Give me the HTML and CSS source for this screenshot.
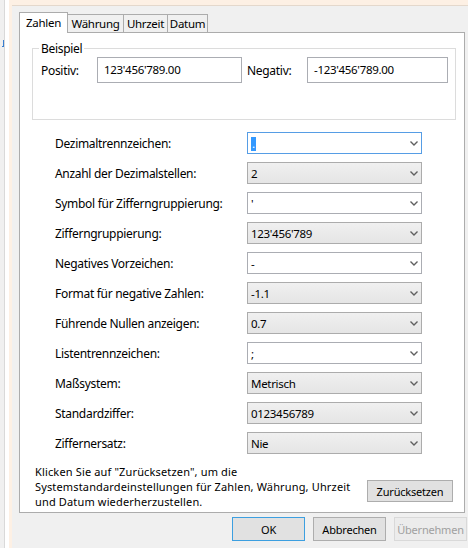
FILE: index.html
```html
<!DOCTYPE html>
<html lang="de">
<head>
  <meta charset="UTF-8" />
  <meta name="viewport" content="width=device-width, initial-scale=1.0"/>
  <title>Format anpassen</title>
  <link rel="stylesheet" href="styles.css">
</head>
<body>
  <div class="screen">
    <div class="side-win"><span class="side-mark"></span></div>
    <div class="side-gap"></div>
    <div class="frame">
      <div class="dialog">
        <div class="tabs">
          <span class="tab active tab-zahlen">Zahlen</span>
          <span class="tab tab-waehrung">Währung</span>
          <span class="tab tab-uhrzeit">Uhrzeit</span>
          <span class="tab tab-datum">Datum</span>
        </div>

        <div class="panel">
          <fieldset class="example">
            <legend>Beispiel</legend>
            <div class="example-row">
              <span class="ex-label">Positiv:</span>
              <div class="field field-pos">123'456'789.00</div>
              <span class="ex-label ex-neg">Negativ:</span>
              <div class="field field-neg">-123'456'789.00</div>
            </div>
          </fieldset>

          <div class="settings">
            <div class="row">
              <span class="row-label">Dezimaltrennzeichen:</span>
              <div class="combo edit focus"><span><span class="sel">.</span></span>
                <svg class="chev" width="8" height="5" viewBox="0 0 8 5"><path d="M0.5 0.5 L4 4 L7.5 0.5" fill="none" stroke="#606060" stroke-width="1.4"/></svg></div>
            </div>
            <div class="row">
              <span class="row-label">Anzahl der Dezimalstellen:</span>
              <div class="combo list"><span>2</span>
                <svg class="chev" width="8" height="5" viewBox="0 0 8 5"><path d="M0.5 0.5 L4 4 L7.5 0.5" fill="none" stroke="#606060" stroke-width="1.4"/></svg></div>
            </div>
            <div class="row">
              <span class="row-label">Symbol für Zifferngruppierung:</span>
              <div class="combo edit"><span>'</span>
                <svg class="chev" width="8" height="5" viewBox="0 0 8 5"><path d="M0.5 0.5 L4 4 L7.5 0.5" fill="none" stroke="#606060" stroke-width="1.4"/></svg></div>
            </div>
            <div class="row">
              <span class="row-label">Zifferngruppierung:</span>
              <div class="combo list"><span>123'456'789</span>
                <svg class="chev" width="8" height="5" viewBox="0 0 8 5"><path d="M0.5 0.5 L4 4 L7.5 0.5" fill="none" stroke="#606060" stroke-width="1.4"/></svg></div>
            </div>
            <div class="row">
              <span class="row-label">Negatives Vorzeichen:</span>
              <div class="combo edit"><span>-</span>
                <svg class="chev" width="8" height="5" viewBox="0 0 8 5"><path d="M0.5 0.5 L4 4 L7.5 0.5" fill="none" stroke="#606060" stroke-width="1.4"/></svg></div>
            </div>
            <div class="row">
              <span class="row-label">Format für negative Zahlen:</span>
              <div class="combo list"><span>-1.1</span>
                <svg class="chev" width="8" height="5" viewBox="0 0 8 5"><path d="M0.5 0.5 L4 4 L7.5 0.5" fill="none" stroke="#606060" stroke-width="1.4"/></svg></div>
            </div>
            <div class="row">
              <span class="row-label">Führende Nullen anzeigen:</span>
              <div class="combo list"><span>0.7</span>
                <svg class="chev" width="8" height="5" viewBox="0 0 8 5"><path d="M0.5 0.5 L4 4 L7.5 0.5" fill="none" stroke="#606060" stroke-width="1.4"/></svg></div>
            </div>
            <div class="row">
              <span class="row-label">Listentrennzeichen:</span>
              <div class="combo edit"><span>;</span>
                <svg class="chev" width="8" height="5" viewBox="0 0 8 5"><path d="M0.5 0.5 L4 4 L7.5 0.5" fill="none" stroke="#606060" stroke-width="1.4"/></svg></div>
            </div>
            <div class="row">
              <span class="row-label">Maßsystem:</span>
              <div class="combo list"><span>Metrisch</span>
                <svg class="chev" width="8" height="5" viewBox="0 0 8 5"><path d="M0.5 0.5 L4 4 L7.5 0.5" fill="none" stroke="#606060" stroke-width="1.4"/></svg></div>
            </div>
            <div class="row">
              <span class="row-label">Standardziffer:</span>
              <div class="combo list"><span>0123456789</span>
                <svg class="chev" width="8" height="5" viewBox="0 0 8 5"><path d="M0.5 0.5 L4 4 L7.5 0.5" fill="none" stroke="#606060" stroke-width="1.4"/></svg></div>
            </div>
            <div class="row">
              <span class="row-label">Ziffernersatz:</span>
              <div class="combo list"><span>Nie</span>
                <svg class="chev" width="8" height="5" viewBox="0 0 8 5"><path d="M0.5 0.5 L4 4 L7.5 0.5" fill="none" stroke="#606060" stroke-width="1.4"/></svg></div>
            </div>
          </div>

          <div class="reset">
            <p class="reset-text">Klicken Sie auf "Zurücksetzen", um die<br>Systemstandardeinstellungen für Zahlen, Währung, Uhrzeit<br>und Datum wiederherzustellen.</p>
            <button class="btn btn-reset">Zurücksetzen</button>
          </div>
        </div>

        <div class="actions">
          <button class="btn btn-action btn-default">OK</button>
          <button class="btn btn-action">Abbrechen</button>
          <button class="btn btn-action" disabled>Übernehmen</button>
        </div>
      </div>
    </div>
  </div>
</body>
</html>
```

FILE: styles.css
```css
* {
  box-sizing: border-box;
}

body {
  margin: 0;
  width: 468px;
  height: 556px;
  overflow: hidden;
  background: #fff;
  font-family: "Noto Sans", "Open Sans", sans-serif;
  font-size: 12px;
  letter-spacing: -0.3px;
  color: #000;
}

.screen {
  display: flex;
  height: 548px;
}

/* window behind the dialog, only its edge shows */
.side-win {
  width: 5px;
  background: #f0f0f0;
  border-right: 1px solid #d9d9d9;
  padding-top: 40px;
}

.side-mark {
  display: block;
  width: 2px;
  height: 7px;
  margin-left: 2px;
  border-right: 1px solid #3a7fd0;
  border-bottom: 1px solid #3a7fd0;
}

.side-gap {
  width: 4px;
  background: #fff;
}

.frame {
  flex: 1;
  border-top: 5px solid #fdf0e4;
  border-left: 3px solid #fdf0e4;
}

.dialog {
  height: 100%;
  background: #f0f0f0;
  border-top: 1px solid #e4d8cc;
  padding: 6px 3px 0 7px;
}

/* tab strip */
.tabs {
  display: flex;
  align-items: flex-end;
  height: 21px;
  margin-bottom: -1px;
  position: relative;
  z-index: 1;
  font-size: 11.5px;
}

.tab {
  height: 18px;
  margin-bottom: 1px;
  margin-left: -1px;
  border: 1px solid #acacac;
  border-bottom: none;
  background: #f0f0f0;
  text-align: center;
  line-height: 17px;
}

.tab.active {
  height: 21px;
  margin-bottom: 0;
  margin-left: 0;
  background: #fff;
  line-height: 19px;
}

.tab-zahlen { width: 49px; }
.tab-waehrung { width: 57px; }
.tab-uhrzeit { width: 45px; }
.tab-datum { width: 41px; }

.panel {
  height: 481px;
  background: #fff;
  border: 1px solid #acacac;
  padding: 0 8px 0 12px;
  display: flex;
  flex-direction: column;
}

/* Beispiel group */
.example {
  margin: 8px 0 0;
  height: 79px;
  padding: 1px 7px 0 8px;
  border: 1px solid #dcdcdc;
}

.example legend {
  padding: 0 2px;
  margin-left: -2px;
  line-height: 15px;
}

.example-row {
  display: flex;
  align-items: center;
}

.ex-label {
  width: 56px;
}

.ex-label.ex-neg {
  width: 60px;
  margin-left: 5px;
}

.field {
  height: 26px;
  border: 1px solid #abadb3;
  padding: 0 6px;
  line-height: 24px;
  font-size: 11.5px;
  white-space: nowrap;
}

.field-pos { width: 145px; }
.field-neg { width: 141px; }

/* settings list */
.settings {
  margin-top: 12px;
  padding-left: 23px;
  display: flex;
  flex-direction: column;
  gap: 8px;
}

.row {
  display: flex;
  align-items: center;
  height: 22px;
}

.row-label {
  width: 192px;
}

.combo {
  width: 175px;
  height: 22px;
  border: 1px solid #acacac;
  display: flex;
  align-items: center;
  justify-content: space-between;
  padding: 0 3px 0 3px;
  font-size: 11.5px;
  white-space: nowrap;
}

.combo.list {
  background: linear-gradient(#f0f0f0, #e5e5e5);
}

.combo.edit {
  background: #fff;
  border-color: #abadb3;
}

.combo.focus {
  border-color: #569de5;
}

.sel {
  display: inline-block;
  background: #3399ff;
  color: #fff;
  padding: 0 1px;
  line-height: 14px;
}

.chev {
  flex-shrink: 0;
}

/* reset hint and button */
.reset {
  display: flex;
  align-items: flex-start;
  justify-content: space-between;
  margin-top: 10px;
  padding-left: 3px;
}

.reset-text {
  margin: 0;
  font-size: 11px;
  letter-spacing: 0.15px;
  line-height: 15px;
}

.btn {
  font-family: inherit;
  font-size: 11px;
  letter-spacing: -0.2px;
  color: #000;
  background: #e1e1e1;
  border: 1px solid #adadad;
  padding: 0;
}

.btn-reset {
  width: 86px;
  height: 22px;
  margin-top: 16px;
  margin-right: 3px;
}

.actions {
  display: flex;
  justify-content: flex-end;
  gap: 8px;
  margin-top: 4px;
  margin-right: -2px;
}

.btn-action {
  width: 73px;
  height: 24px;
}

.btn-default {
  border-color: #3c9fe0;
}

.btn:disabled {
  background: #ececec;
  border-color: #d9d9d9;
  color: #a0a0a0;
}
```
